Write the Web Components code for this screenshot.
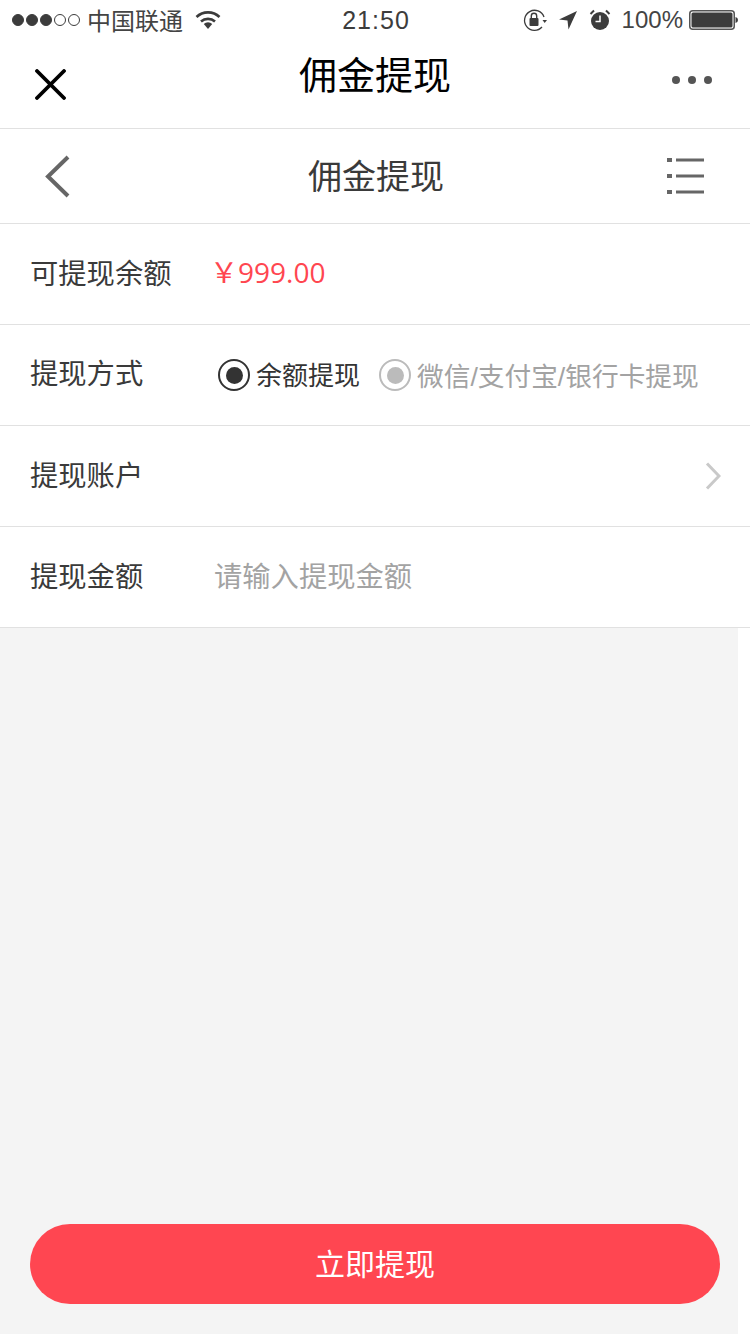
<!DOCTYPE html>
<html lang="zh">
<head>
<meta charset="utf-8">
<title>佣金提现</title>
<style>
  html, body { margin: 0; padding: 0; background: #fff; }
  body { font-family: "Liberation Sans", "Noto Sans CJK SC", sans-serif; color: #333; }
  #page { display: flex; flex-direction: column; width: 750px; height: 1334px; overflow: hidden; }
</style>
</head>
<body>
<div id="page">
  <status-bar></status-bar>
  <nav-bar title="佣金提现"></nav-bar>
  <sub-header title="佣金提现"></sub-header>
  <form-row label="可提现余额"><span slot="value" style="color:#ff4650;font-size:28px;font-family:'Open Sans','Noto Sans CJK SC',sans-serif;margin-left:-4px;position:relative;top:-3px">￥999.00</span></form-row>
  <form-row label="提现方式" shift="-4">
    <div slot="value" style="display:flex;align-items:center;margin-left:4px">
      <radio-option checked>余额提现</radio-option>
      <radio-option disabled style="margin-left:19px">微信/支付宝/银行卡提现</radio-option>
    </div>
  </form-row>
  <form-row label="提现账户" arrow></form-row>
  <form-row label="提现金额"><span slot="value" style="color:#a3a3a3;position:relative;top:-3px">请输入提现金额</span></form-row>
  <bottom-area>立即提现</bottom-area>
</div>

<script>
const CJK = '"Liberation Sans", "Noto Sans CJK SC", sans-serif';

class StatusBar extends HTMLElement {
  constructor() {
    super();
    this.attachShadow({ mode: "open" }).innerHTML = `
      <style>
        :host { display: flex; align-items: center; height: 40px; flex: none; position: relative; color: #3c3c3c; font-family: ${CJK}; }
        .left { display: flex; align-items: center; padding-left: 12px; }
        .dots { display: flex; gap: 2px; }
        .dots i { width: 12px; height: 12px; box-sizing: border-box; border-radius: 50%; border: 1px solid #3c3c3c; }
        .dots i.on { background: #3c3c3c; }
        .carrier { font-size: 24px; margin-left: 7px; color: #444; position: relative; top: -1px; }
        .wifi { margin-left: 12px; }
        .time { position: absolute; left: 2px; right: 0; top: 5px; text-align: center; font-size: 25px; line-height: 30px; letter-spacing: 1px; }
        .right { margin-left: auto; display: flex; align-items: center; padding-right: 11px; }
        .pct { font-size: 24px; margin-left: 11px; color: #444; }
      </style>
      <div class="left">
        <div class="dots"><i class="on"></i><i class="on"></i><i class="on"></i><i></i><i></i></div>
        <span class="carrier">中国联通</span>
        <svg class="wifi" width="26" height="20" viewBox="0 0 26 20">
          <path d="M1.5 7 A16.5 16.5 0 0 1 24.5 7" fill="none" stroke="#3c3c3c" stroke-width="2.6"/>
          <path d="M6 11.5 A10.5 10.5 0 0 1 20 11.5" fill="none" stroke="#3c3c3c" stroke-width="2.6"/>
          <path d="M8.8 14 A6 6 0 0 1 17.2 14 L13 19 Z" fill="#3c3c3c"/>
        </svg>
      </div>
      <div class="time">21:50</div>
      <div class="right">
        <svg width="24" height="24" viewBox="0 0 24 24">
          <path d="M21 9 A10 10 0 1 0 19 19" fill="none" stroke="#3c3c3c" stroke-width="1.3"/>
          <path d="M19.5 12 H24 L21.7 15 Z" fill="#3c3c3c"/>
          <rect x="6.5" y="10" width="9" height="8" rx="1" fill="#3c3c3c"/>
          <path d="M8.3 10 V8 A2.7 2.7 0 0 1 13.7 8 V10" fill="none" stroke="#3c3c3c" stroke-width="1.4"/>
        </svg>
        <svg style="margin-left:11px" width="20" height="20" viewBox="0 0 20 20">
          <path d="M19 1 L10.5 19.5 L9.5 10.5 L1 9.5 Z" fill="#3c3c3c"/>
        </svg>
        <svg style="margin-left:11px" width="22" height="22" viewBox="0 0 22 22">
          <circle cx="11" cy="12" r="9" fill="#3c3c3c"/>
          <path d="M1.5 5 L5 1.5 M20.5 5 L17 1.5" stroke="#3c3c3c" stroke-width="2"/>
          <path d="M11 6.5 V12.5 H6.5" fill="none" stroke="#fff" stroke-width="1.5"/>
        </svg>
        <span class="pct">100%</span>
        <svg style="margin-left:6px" width="50" height="20" viewBox="0 0 50 20">
          <rect x=".75" y=".75" width="44.5" height="18.5" rx="3" fill="none" stroke="#555" stroke-width="1.5"/>
          <rect x="2.5" y="2.5" width="41" height="15" rx="1.5" fill="#3c3c3c"/>
          <path d="M46.5 7 Q49 7.5 49 10 Q49 12.5 46.5 13 Z" fill="#3c3c3c"/>
        </svg>
      </div>`;
  }
}

class NavBar extends HTMLElement {
  constructor() {
    super();
    this.attachShadow({ mode: "open" }).innerHTML = `
      <style>
        :host { display: flex; align-items: center; justify-content: space-between; flex: none; box-sizing: border-box; height: 89px; padding: 0 38px 0 35px; border-bottom: 1px solid #e1e1e1; position: relative; font-family: ${CJK}; }
        .title { position: absolute; left: 0; right: 0; top: 10px; text-align: center; font-size: 38px; line-height: 52px; color: #000; }
        .x { display: block; }
        .more { display: flex; gap: 8px; margin-top: -9px; }
        .more i { width: 8px; height: 8px; border-radius: 50%; background: #555; }
      </style>
      <svg class="x" width="31" height="31" viewBox="0 0 31 31"><path d="M2 2 L29 29 M29 2 L2 29" stroke="#000" stroke-width="3.8" stroke-linecap="round"/></svg>
      <div class="title">${this.getAttribute("title")}</div>
      <div class="more"><i></i><i></i><i></i></div>`;
  }
}

class SubHeader extends HTMLElement {
  constructor() {
    super();
    this.attachShadow({ mode: "open" }).innerHTML = `
      <style>
        :host { display: flex; align-items: center; justify-content: space-between; flex: none; box-sizing: border-box; height: 95px; padding: 0 45px; border-bottom: 1px solid #e1e1e1; position: relative; font-family: ${CJK}; }
        .title { position: absolute; left: 2px; right: 0; top: 23px; text-align: center; font-size: 34px; line-height: 50px; color: #3a3a3a; }
        .list { display: block; margin-top: 1px; }
      </style>
      <svg width="25" height="43" viewBox="0 0 25 43"><path d="M23 2 L3 21.5 L23 41" fill="none" stroke="#666" stroke-width="4"/></svg>
      <div class="title">${this.getAttribute("title")}</div>
      <svg class="list" width="38" height="38" viewBox="0 0 38 38" fill="#666">
        <rect x="0" y="0" width="5" height="4"/><rect x="9" y="0.5" width="28" height="3"/>
        <rect x="0" y="16" width="5" height="4"/><rect x="9" y="16.5" width="28" height="3"/>
        <rect x="0" y="32" width="5" height="4"/><rect x="9" y="32.5" width="28" height="3"/>
      </svg>`;
  }
}

class FormRow extends HTMLElement {
  constructor() {
    super();
    const arrow = this.hasAttribute("arrow")
      ? `<svg class="arrow" width="16" height="28" viewBox="0 0 16 28"><path d="M2 1.5 L14 14 L2 26.5" fill="none" stroke="#c9c9c9" stroke-width="3"/></svg>`
      : "";
    this.attachShadow({ mode: "open" }).innerHTML = `
      <style>
        :host { display: flex; align-items: center; flex: none; box-sizing: border-box; height: 101px; padding: 0 29px 0 30px; border-bottom: 1px solid #e1e1e1; font-family: ${CJK}; font-size: 28.3px; color: #333; }
        .label { width: 184px; flex: none; color: #3a3a3a; position: relative; top: ${this.getAttribute("shift") || -3}px; }
        .value { flex: 1; display: flex; align-items: center; min-width: 0; }
        .arrow { margin-left: auto; display: block; }
      </style>
      <div class="label">${this.getAttribute("label")}</div>
      <div class="value"><slot name="value"></slot></div>
      ${arrow}`;
  }
}

class RadioOption extends HTMLElement {
  constructor() {
    super();
    const color = this.hasAttribute("disabled") ? "#bbb" : "#333";
    const text = this.hasAttribute("disabled") ? "#a3a3a3" : "#333";
    const size = this.hasAttribute("disabled") ? 26.7 : 26;
    const nudge = this.hasAttribute("disabled") ? -1 : -2;
    this.attachShadow({ mode: "open" }).innerHTML = `
      <style>
        :host { display: inline-flex; align-items: center; white-space: nowrap; color: ${text}; font-size: ${size}px; }
        .dot { width: 32px; height: 32px; box-sizing: border-box; border: 2px solid ${color}; border-radius: 50%; display: flex; align-items: center; justify-content: center; margin-right: 6px; }
        .dot i { width: 17px; height: 17px; border-radius: 50%; background: ${color}; }
        span { position: relative; top: ${nudge}px; }
      </style>
      <div class="dot"><i></i></div>
      <span><slot></slot></span>`;
  }
}

class BottomArea extends HTMLElement {
  constructor() {
    super();
    this.attachShadow({ mode: "open" }).innerHTML = `
      <style>
        :host { display: flex; flex-direction: column; justify-content: flex-end; flex: 1; width: 738px; box-sizing: border-box; padding: 0 0 30px 30px; background: #f4f4f4; font-family: ${CJK}; }
        button { width: 690px; height: 80px; border: 0; border-radius: 40px; background: #ff4651; color: #fff; font: inherit; font-size: 30px; padding: 0 0 4px; }
      </style>
      <button><slot></slot></button>`;
  }
}

customElements.define("status-bar", StatusBar);
customElements.define("nav-bar", NavBar);
customElements.define("sub-header", SubHeader);
customElements.define("form-row", FormRow);
customElements.define("radio-option", RadioOption);
customElements.define("bottom-area", BottomArea);
</script>
</body>
</html>
